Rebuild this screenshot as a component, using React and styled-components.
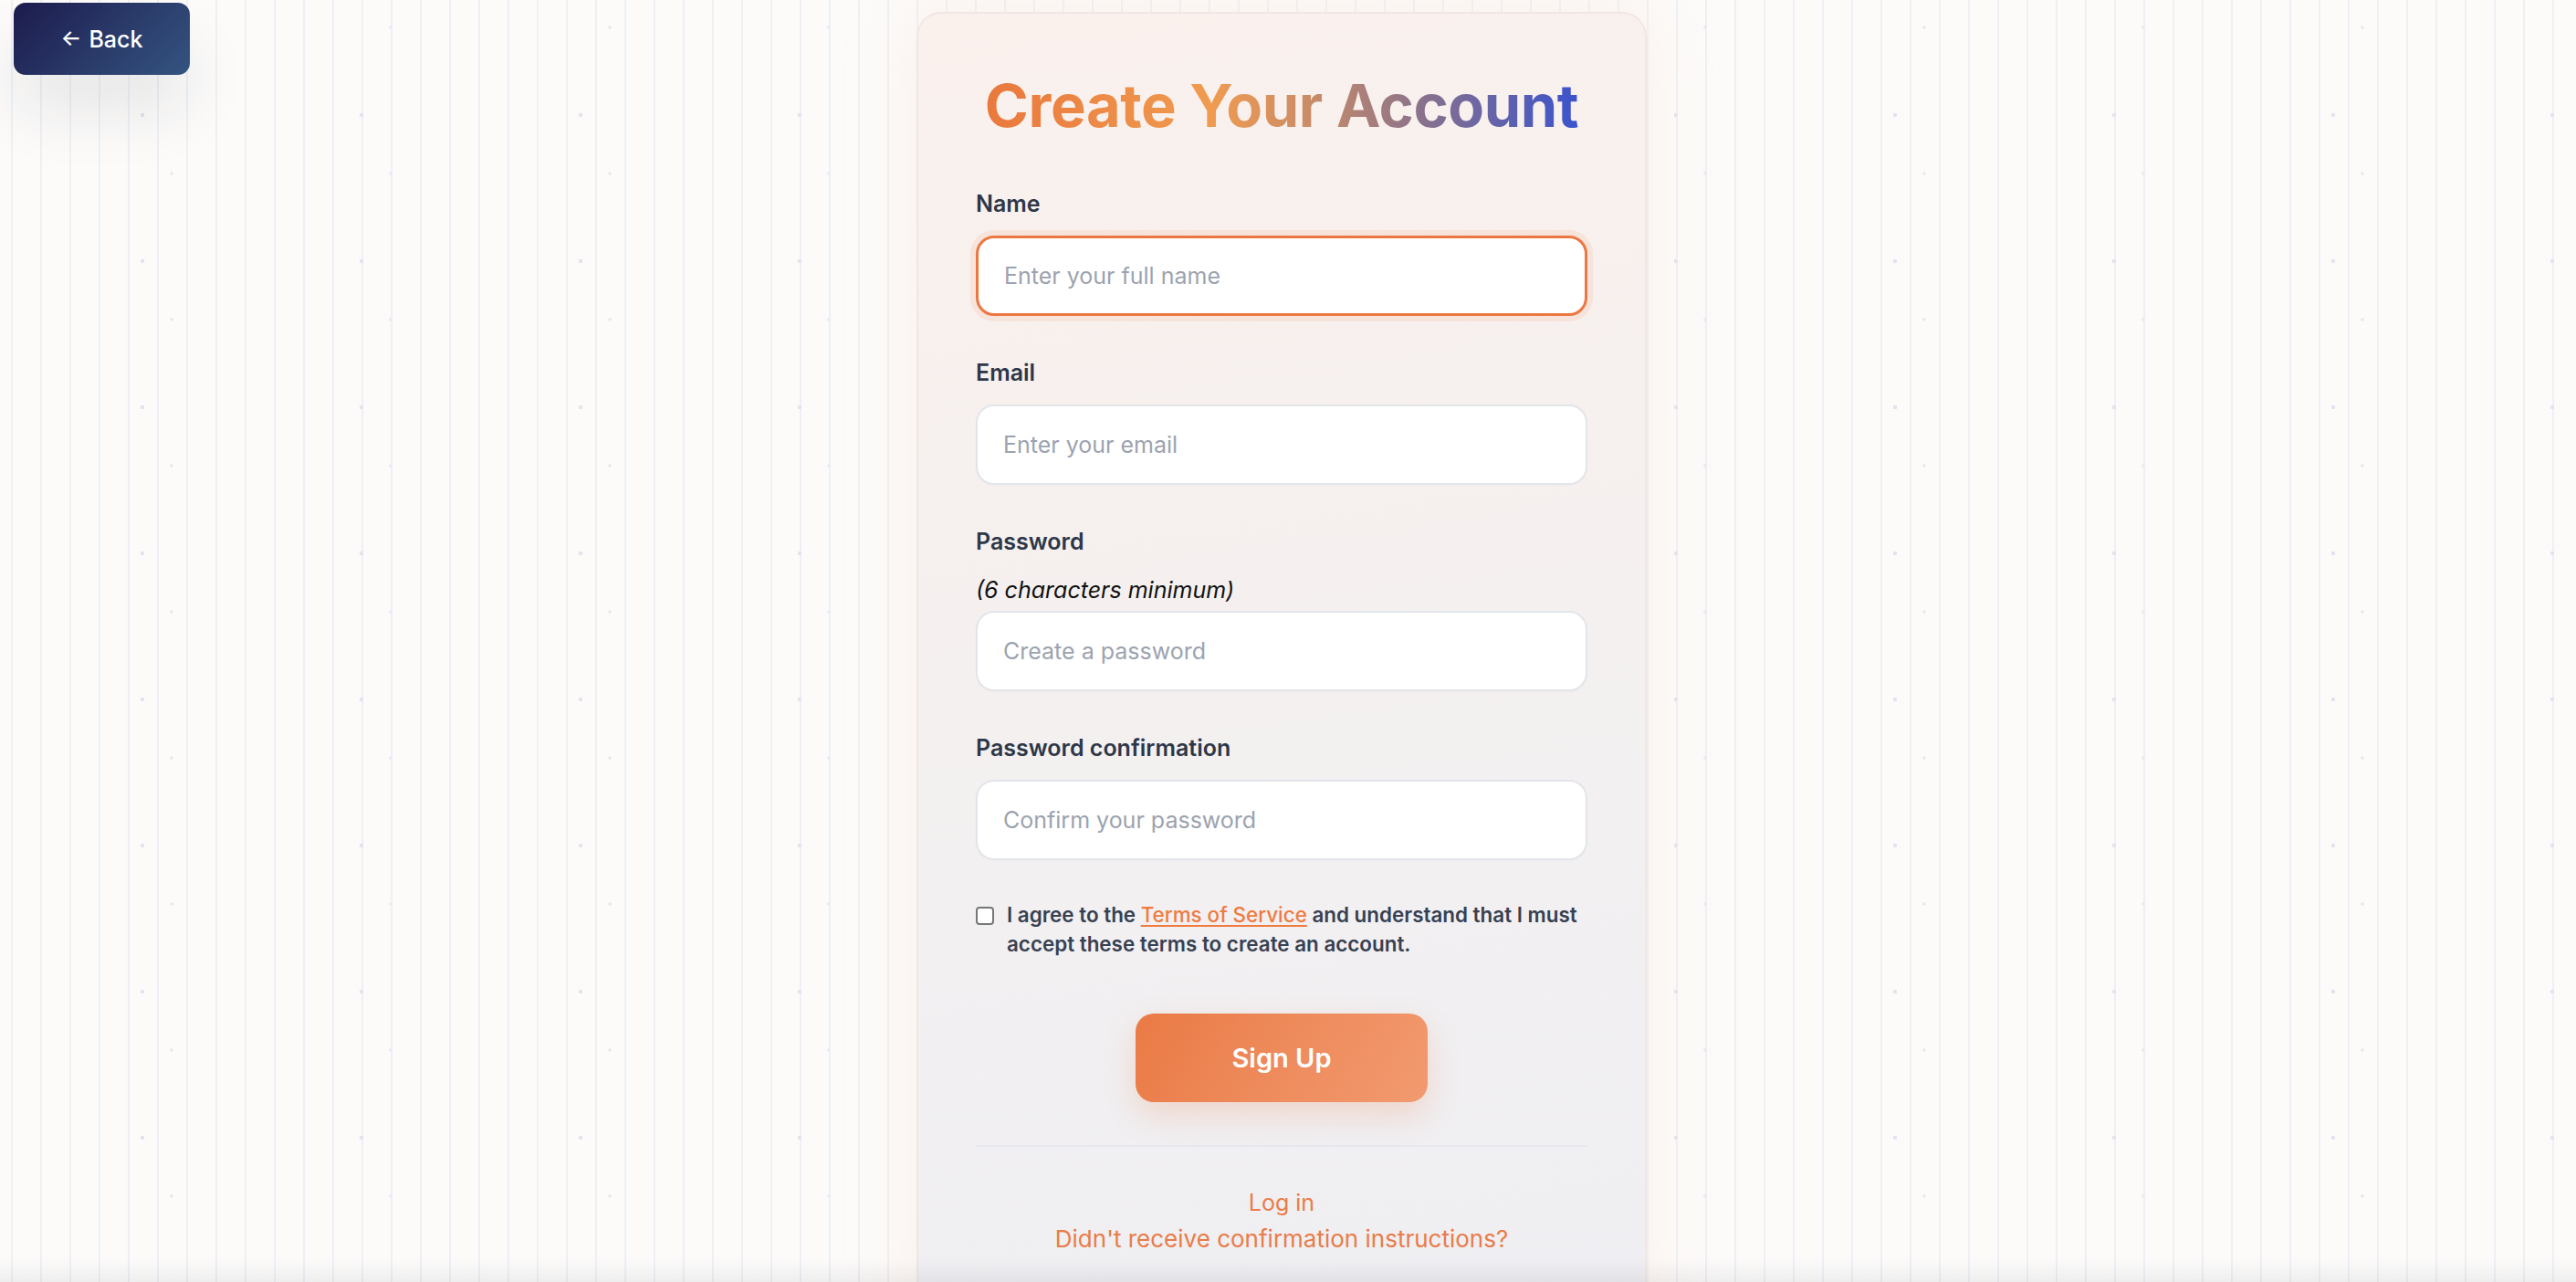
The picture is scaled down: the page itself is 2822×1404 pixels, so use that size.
import { useState } from 'react';
import styled, { createGlobalStyle } from 'styled-components';

const GlobalStyle = createGlobalStyle`
  * {
    box-sizing: border-box;
  }
  html, body {
    margin: 0;
    padding: 0;
  }
  body {
    font-family: Inter, "Noto Sans", "Liberation Sans", sans-serif;
    background-color: #fcfbfa;
    background-image:
      radial-gradient(circle at 156px 126px, #e2e3ec 0, #e2e3ec 2px, transparent 2.5px),
      radial-gradient(circle at 188px 30px, #eaebf1 0, #eaebf1 1.6px, transparent 2px),
      linear-gradient(90deg, #eef0f5 0, #eef0f5 2px, transparent 2px);
    background-size: 240px 160px, 240px 160px, 32px 100%;
    background-position: 0 0, 0 0, 12px 0;
    overflow: hidden;
  }
  body::after {
    content: '';
    position: fixed;
    left: 0;
    right: 0;
    bottom: 0;
    height: 26px;
    pointer-events: none;
    background: linear-gradient(180deg, rgba(0, 0, 0, 0) 0%, rgba(40, 40, 60, 0.06) 100%);
  }
`;

const Page = () => {
  const [form, setForm] = useState({
    name: '',
    email: '',
    password: '',
    password_confirmation: '',
    terms: false,
  });

  const handleChange = (e) => {
    const { name, value, type, checked } = e.target;
    setForm({ ...form, [name]: type === 'checkbox' ? checked : value });
  };

  return (
    <BaseContainer>
      <NavColumn>
        <BackButton type="button">
          <span>←</span> Back
        </BackButton>
      </NavColumn>
      <Card>
        <Title>Create Your Account</Title>
        <Form onSubmit={(e) => e.preventDefault()}>
          <Field>
            <Label htmlFor="name">Name</Label>
            <Input
              id="name"
              name="name"
              placeholder="Enter your full name"
              value={form.name}
              onChange={handleChange}
              $active
              autoFocus
            />
          </Field>
          <Field>
            <Label htmlFor="email">Email</Label>
            <Input
              id="email"
              name="email"
              type="email"
              placeholder="Enter your email"
              value={form.email}
              onChange={handleChange}
            />
          </Field>
          <Field>
            <Label htmlFor="password">Password</Label>
            <Hint>(6 characters minimum)</Hint>
            <Input
              id="password"
              name="password"
              type="password"
              placeholder="Create a password"
              value={form.password}
              onChange={handleChange}
            />
          </Field>
          <Field>
            <Label htmlFor="password_confirmation">Password confirmation</Label>
            <Input
              id="password_confirmation"
              name="password_confirmation"
              type="password"
              placeholder="Confirm your password"
              value={form.password_confirmation}
              onChange={handleChange}
            />
          </Field>
          <TermsRow>
            <Checkbox
              type="checkbox"
              name="terms"
              checked={form.terms}
              onChange={handleChange}
            />
            <TermsText>
              I agree to the <TermsLink href="#">Terms of Service</TermsLink> and
              understand that I must accept these terms to create an account.
            </TermsText>
          </TermsRow>
          <ButtonRow>
            <SubmitButton type="submit">Sign Up</SubmitButton>
          </ButtonRow>
        </Form>
        <Divider />
        <Links>
          <FooterLink href="#">Log in</FooterLink>
          <FooterLink href="#" $wide>
            Didn't receive confirmation instructions?
          </FooterLink>
        </Links>
      </Card>
      <div />
    </BaseContainer>
  );
};

export default function App() {
  return (
    <>
      <GlobalStyle />
      <Page />
    </>
  );
}

const BaseContainer = styled.div`
  width: 100%;
  min-height: 1404px;
  padding-right: 14px;
  display: grid;
  grid-template-columns: 1fr 800px 1fr;
  align-items: start;
`;

const NavColumn = styled.div`
  padding: 3px 0 0 15px;
`;

const BackButton = styled.button`
  width: 193px;
  height: 79px;
  border: none;
  border-radius: 13px;
  background: linear-gradient(135deg, #1c1b4d 0%, #2a3b6a 55%, #34547f 100%);
  color: #ffffff;
  font-family: Inter, "Liberation Sans", sans-serif;
  font-size: 25px;
  font-weight: 500;
  display: flex;
  align-items: center;
  justify-content: center;
  gap: 8px;
  cursor: pointer;
  box-shadow: 0 40px 70px -4px rgba(30, 30, 50, 0.1);

  span {
    font-size: 24px;
    margin-top: -2px;
  }
`;

const Card = styled.div`
  margin-top: 13px;
  width: 800px;
  padding: 62px 63px 60px;
  border: 2px solid #f0e7e4;
  border-radius: 27px;
  background: linear-gradient(172deg, #faf1ed 0%, #f6f0ee 35%, #f2f0f1 65%, #efeef2 100%);
  box-shadow: 0 0 70px 14px rgba(252, 228, 212, 0.32);
`;

const Title = styled.h1`
  margin: 0 auto 50px;
  text-align: center;
  font-size: 65px;
  line-height: 78px;
  font-weight: 700;
  letter-spacing: -0.4px;
  background: linear-gradient(90deg, #e9783c 0%, #f09b50 38%, #c98c68 55%, #85708f 75%, #3b53cd 100%);
  -webkit-background-clip: text;
  background-clip: text;
  color: transparent;
  width: fit-content;
`;

const Form = styled.form`
  display: flex;
  flex-direction: column;
  gap: 44px;
`;

const Field = styled.div`
  display: flex;
  flex-direction: column;
`;

const Label = styled.label`
  font-size: 25px;
  line-height: 36px;
  font-weight: 600;
  color: #2d3748;
  margin-bottom: 17px;
`;

const Hint = styled.div`
  font-size: 25px;
  line-height: 36px;
  font-style: italic;
  color: #111111;
  margin-bottom: 5px;
`;

const Input = styled.input`
  width: 100%;
  height: 88px;
  padding: 0 28px;
  border-radius: 20px;
  border: ${(p) => (p.$active ? '3px solid #ec7743' : '2.5px solid #e3e5ea')};
  box-shadow: ${(p) =>
    p.$active ? '0 0 0 6px rgba(241, 160, 120, 0.16)' : '0 1px 2px rgba(0, 0, 0, 0.02)'};
  background: #ffffff;
  font-family: Inter, "Liberation Sans", sans-serif;
  font-size: 25px;
  color: #1f2937;
  caret-color: #1f2937;
  outline: none;

  &::placeholder {
    color: #9ca3af;
  }
`;

const TermsRow = styled.div`
  display: flex;
  align-items: flex-start;
  gap: 14px;
`;

const Checkbox = styled.input`
  appearance: none;
  -webkit-appearance: none;
  flex-shrink: 0;
  width: 20px;
  height: 20px;
  margin: 7px 0 0;
  border: 2px solid #777777;
  border-radius: 4px;
  background: #ffffff;
`;

const TermsText = styled.p`
  margin: 0;
  font-size: 22.4px;
  line-height: 32px;
  font-weight: 600;
  color: #374151;
`;

const TermsLink = styled.a`
  color: #ef7b3f;
  font-weight: 500;
  text-decoration: underline;
  text-underline-offset: 3px;
  text-decoration-thickness: 2px;
`;

const ButtonRow = styled.div`
  display: flex;
  justify-content: center;
  margin-top: 16px;
`;

const SubmitButton = styled.button`
  width: 320px;
  height: 97px;
  border: none;
  border-radius: 20px;
  background: linear-gradient(120deg, #ea7a45 0%, #ee8b5c 50%, #f29a70 100%);
  color: #ffffff;
  font-family: Inter, "Liberation Sans", sans-serif;
  font-size: 29px;
  font-weight: 600;
  cursor: pointer;
  box-shadow: 0 14px 34px rgba(234, 122, 69, 0.22);
`;

const Divider = styled.div`
  height: 2px;
  margin-top: 47px;
  background: #e7e8ee;
`;

const Links = styled.div`
  margin-top: 41px;
  display: flex;
  flex-direction: column;
  align-items: center;
`;

const FooterLink = styled.a`
  font-size: ${(p) => (p.$wide ? '26px' : '25px')};
  line-height: 40px;
  color: #e97c49;
  text-decoration: none;
`;
